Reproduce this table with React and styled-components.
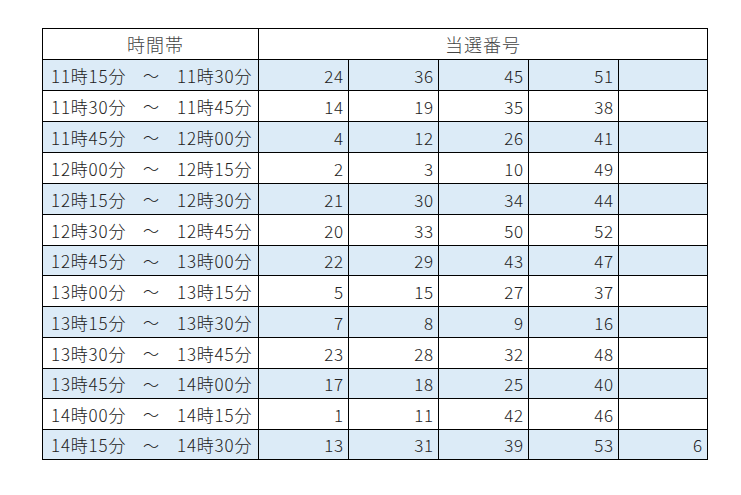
import React from "react";
import styled, { createGlobalStyle } from "styled-components";

const Global = createGlobalStyle`
  html, body { margin: 0; padding: 0; background: #ffffff; }
  body { font-family: "Noto Sans CJK JP", "Noto Sans", sans-serif; }
`;

const Page = styled.div`
  padding: 28px 0 0 42px;
`;

const Grid = styled.div`
  display: grid;
  grid-template-columns: 216px 90px 90px 90px 90px 89px;
  width: max-content;
  border-top: 1px solid #000;
  border-left: 1px solid #000;
`;

const Cell = styled.div`
  box-sizing: border-box;
  height: ${(p) => p.$h}px;
  border-right: 1px solid #000;
  border-bottom: 1px solid #000;
  background: ${(p) => (p.$fill ? "#dcebf7" : "#ffffff")};
  display: flex;
  align-items: center;
  color: #222222;
  font-size: 17px;
  font-weight: 300;
  line-height: 1;
`;

const HeadCell = styled(Cell)`
  grid-column: span ${(p) => p.$span || 1};
  justify-content: center;
  font-size: 18px;
  color: #444444;
  padding-left: ${(p) => p.$shift || 0}px;
  letter-spacing: 1px;
`;

const TimeCell = styled(Cell)`
  display: grid;
  grid-template-columns: 92px 34px auto;
  align-items: center;
  padding-left: 8px;
  white-space: nowrap;
  letter-spacing: 0.8px;
`;

const NumCell = styled(Cell)`
  justify-content: flex-end;
  padding-right: 4px;
  letter-spacing: 0.8px;
`;

const Tilde = styled.span`
  font-size: 16px;
`;

const rows = [
  ["11時15分", "11時30分", [24, 36, 45, 51, ""]],
  ["11時30分", "11時45分", [14, 19, 35, 38, ""]],
  ["11時45分", "12時00分", [4, 12, 26, 41, ""]],
  ["12時00分", "12時15分", [2, 3, 10, 49, ""]],
  ["12時15分", "12時30分", [21, 30, 34, 44, ""]],
  ["12時30分", "12時45分", [20, 33, 50, 52, ""]],
  ["12時45分", "13時00分", [22, 29, 43, 47, ""]],
  ["13時00分", "13時15分", [5, 15, 27, 37, ""]],
  ["13時15分", "13時30分", [7, 8, 9, 16, ""]],
  ["13時30分", "13時45分", [23, 28, 32, 48, ""]],
  ["13時45分", "14時00分", [17, 18, 25, 40, ""]],
  ["14時00分", "14時15分", [1, 11, 42, 46, ""]],
  ["14時15分", "14時30分", [13, 31, 39, 53, 6]],
];

const heights = [31, 31, 31, 31, 31, 31, 30, 31, 31, 31, 30, 31, 30];

export default function App() {
  return (
    <>
      <Global />
      <Page>
        <Grid>
          <HeadCell $h={31} $shift={10}>時間帯</HeadCell>
          <HeadCell $h={31} $span={5}>当選番号</HeadCell>
          {rows.map(([from, to, nums], i) => {
            const fill = i % 2 === 0;
            const h = heights[i];
            return (
              <React.Fragment key={i}>
                <TimeCell $h={h} $fill={fill}>
                  <span>{from}</span>
                  <Tilde>～</Tilde>
                  <span>{to}</span>
                </TimeCell>
                {nums.map((n, j) => (
                  <NumCell key={j} $h={h} $fill={fill}>
                    {n}
                  </NumCell>
                ))}
              </React.Fragment>
            );
          })}
        </Grid>
      </Page>
    </>
  );
}
